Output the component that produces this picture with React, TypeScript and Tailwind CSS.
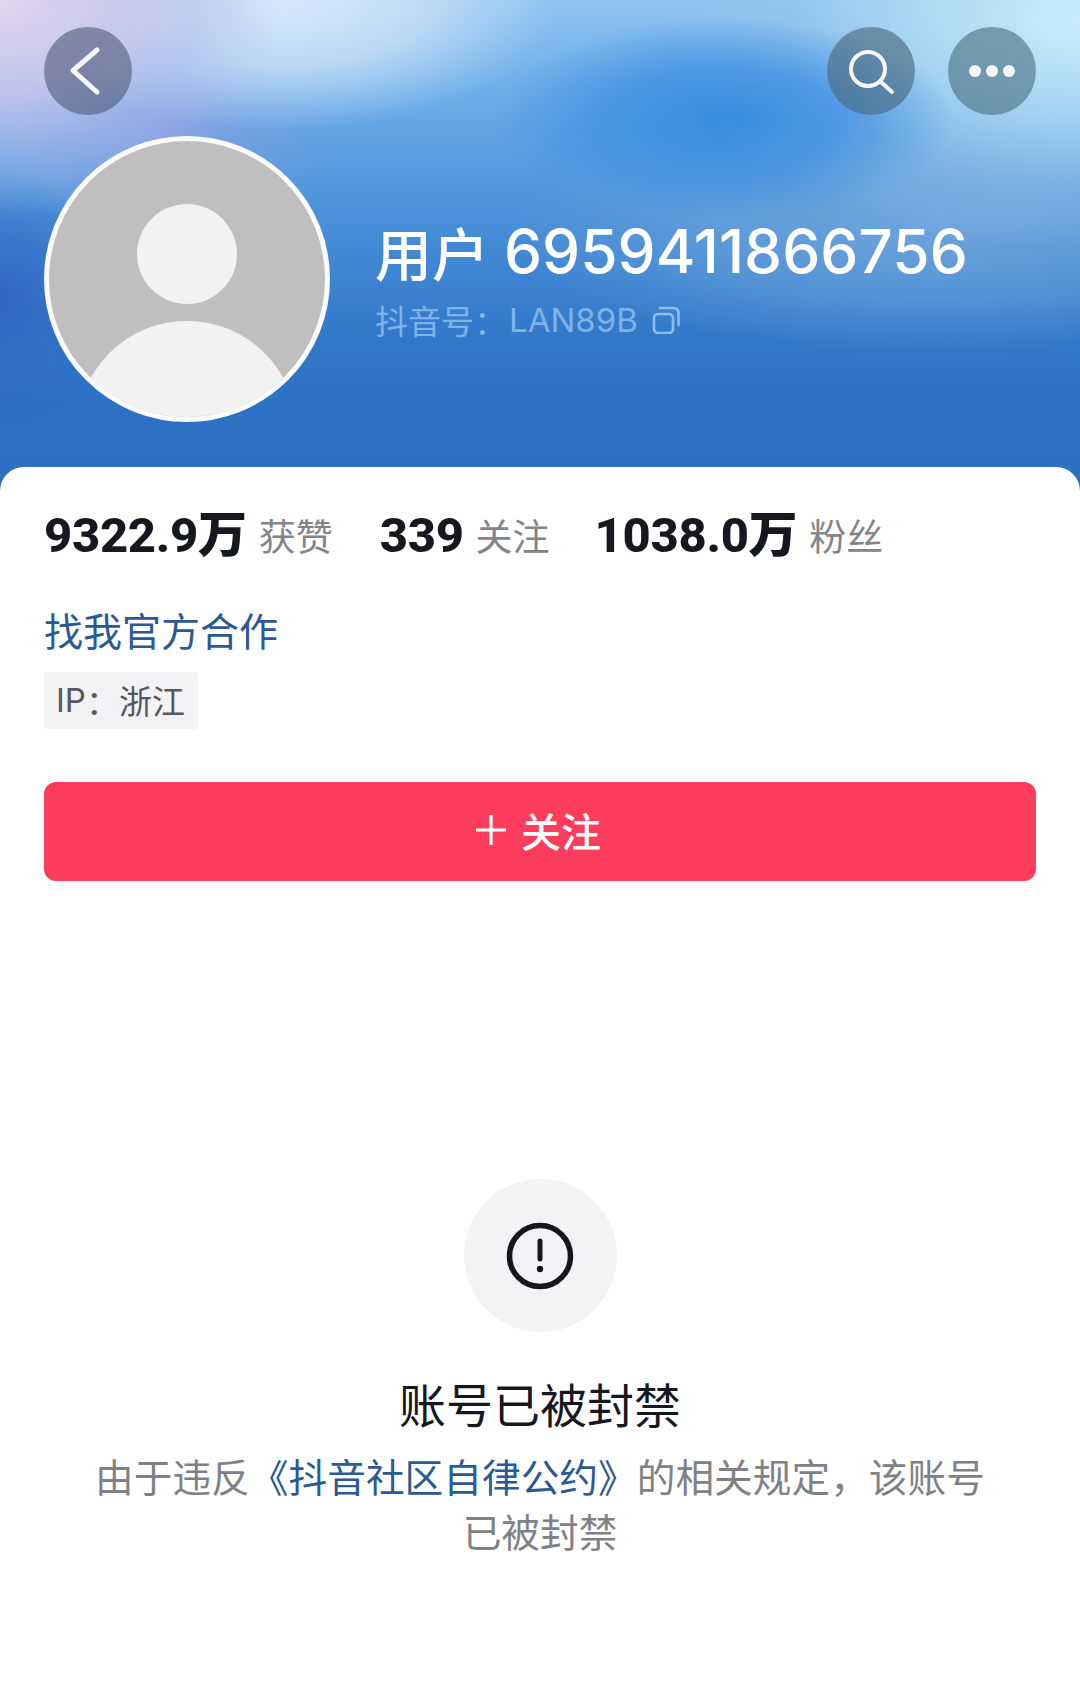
import React from "react";

function Stat({ n, l }: { n: string; l: string }) {
  return (
    <div className="flex items-center">
      <span className="text-[49px] leading-[60px] font-extrabold tracking-[-0.3px] text-[#16181f] font-['Roboto','Noto_Sans_CJK_SC',sans-serif]">{n}</span>
      <span className="text-[37px] leading-[60px] text-[#83858a] ml-[12px] mt-[-2px]">{l}</span>
    </div>
  );
}

export default function App() {
  return (
    <div className="w-[1080px] h-[1681px] bg-white overflow-hidden font-['Noto_Sans_CJK_SC','Liberation_Sans',sans-serif]">
      <div className="h-[490px] px-[44px] pt-[27px] bg-[radial-gradient(ellipse_280px_220px_at_0px_0px,#e2d6eeff_0%,#cfc8ecd8_40%,#b4bceb80_70%,#b4bceb00_100%),radial-gradient(ellipse_280px_130px_at_280px_0px,#d8e8fbff_0%,#d0e4f8c0_50%,#d0e4f800_100%),radial-gradient(ellipse_170px_110px_at_170px_135px,#8f9ce0b0_0%,#8f9ce000_100%),radial-gradient(ellipse_230px_100px_at_725px_118px,#3a8de0ff_0%,#3a8de0b0_50%,#3a8de000_100%),radial-gradient(ellipse_420px_230px_at_1080px_20px,#c8eefdff_0%,#b4dcf4d0_40%,#9cc8ec70_70%,#9cc8ec00_100%),radial-gradient(ellipse_420px_130px_at_930px_225px,#76a9dcd0_0%,#76a9dc70_55%,#76a9dc00_100%),radial-gradient(ellipse_130px_130px_at_0px_300px,#3267c4ff_0%,#3267c400_100%),linear-gradient(180deg,#8fc3f0_0%,#6bace8_20%,#5097dd_38%,#4188d4_52%,#3379ca_68%,#2c71c3_82%,#2b70c2_100%)]">
        <div className="flex items-center justify-between">
          <button className="w-[88px] h-[88px] rounded-full bg-[#4b5a7a]/60 flex items-center justify-center">
            <svg width="88" height="88" viewBox="0 0 88 88" fill="none" stroke="#f4f6fa" strokeWidth="5" strokeLinecap="round" strokeLinejoin="round">
              <path d="M53 23 L29 43.500 L53 65" />
            </svg>
          </button>
          <div className="flex gap-[33px]">
            <button className="w-[88px] h-[88px] rounded-full bg-[#4a6a80]/65 flex items-center justify-center">
              <svg width="88" height="88" viewBox="0 0 88 88" fill="none" stroke="#f4f6fa" strokeWidth="4" strokeLinecap="round">
                <circle cx="41" cy="42" r="17" />
                <path d="M54 55 L65 65" />
              </svg>
            </button>
            <button className="w-[88px] h-[88px] rounded-full bg-[#4f7488]/65 flex items-center justify-center gap-[5px]">
              <span className="w-[12px] h-[12px] rounded-full bg-[#f4f6fa]" />
              <span className="w-[12px] h-[12px] rounded-full bg-[#f4f6fa]" />
              <span className="w-[12px] h-[12px] rounded-full bg-[#f4f6fa]" />
            </button>
          </div>
        </div>
        <div className="flex items-start mt-[21px]">
          <div className="w-[286px] h-[286px] rounded-full border-[5px] border-[#fafbfd] bg-[#bfbfbf] overflow-hidden shrink-0">
            <svg width="276" height="276" viewBox="0 0 276 276">
              <circle cx="138" cy="113" r="50" fill="#f2f2f3" />
              <circle cx="138" cy="290" r="110" fill="#f2f2f3" />
            </svg>
          </div>
          <div className="ml-[45px] mt-[79px]">
            <div className="flex items-center h-[72px] text-white font-medium whitespace-nowrap">
              <span className="text-[57px] leading-[72px]">用户</span>
              <span className="text-[60.500px] leading-[72px] ml-[15px] font-['Inter',sans-serif]">6959411866756</span>
            </div>
            <div className="flex items-center mt-[11px] text-[#7fb2e8] text-[33px] leading-[44px]">
              <span>抖音号：</span>
              <span className="font-['Inter',sans-serif] ml-[2px]">LAN89B</span>
              <svg className="ml-[14px]" width="28" height="28" viewBox="0 0 28 28" fill="none" stroke="#8fbdec" strokeWidth="2.6" strokeLinejoin="round" strokeLinecap="round">
                <rect x="2" y="8" width="19" height="19" rx="4" />
                <path d="M8 2 H21 Q26.500 2 26.500 7.500 V19" />
              </svg>
            </div>
          </div>
        </div>
      </div>

      <div className="mt-[-23px] h-[1214px] bg-white rounded-t-[24px] px-[44px] pt-[39px]">
        <div className="flex items-center">
          <Stat n="9322.9万" l="获赞" />
          <div className="w-[47px]" />
          <Stat n="339" l="关注" />
          <div className="w-[45px]" />
          <Stat n="1038.0万" l="粉丝" />
        </div>
        <div className="mt-[36px] text-[39px] leading-[54px] text-[#2a5a92]">找我官方合作</div>
        <div className="mt-[16px] w-[154px] h-[57px] bg-[#f3f3f5] rounded-[4px] flex items-center pl-[12px] text-[33px] text-[#57585c] whitespace-nowrap">
          <span className="font-['Inter',sans-serif]">IP</span><span>：</span><span>浙江</span>
        </div>
        <button className="mt-[53px] w-[992px] h-[99px] rounded-[12px] bg-[#fe3c5c] flex items-center justify-center text-white text-[40px] font-medium pb-[4px] pr-[4px]">
          <svg width="32" height="32" viewBox="0 0 32 32" fill="none" stroke="white" strokeWidth="3.2" className="mr-[14px]">
            <path d="M16 1 V31 M1 16 H31" />
          </svg>
          关注
        </button>

        <div className="mt-[298px] flex flex-col items-center">
          <div className="w-[153px] h-[153px] rounded-full bg-[#f3f3f5] flex items-center justify-center">
            <svg width="68" height="68" viewBox="0 0 68 68" fill="none" stroke="#15171d" strokeWidth="5.500" strokeLinecap="round">
              <circle cx="34" cy="34" r="30.500" />
              <path d="M34 19 V37" strokeWidth="5" />
              <circle cx="34" cy="47" r="3.200" fill="#15171d" stroke="none" />
            </svg>
          </div>
          <div className="mt-[38px] text-[47px] leading-[66px] text-[#16181f]">账号已被封禁</div>
          <div className="mt-[12px] w-[900px] text-center text-[38.700px] leading-[55px] text-[#808186]">
            由于违反<span className="text-[#2a5a92]">《抖音社区自律公约》</span>的相关规定，该账号<br />已被封禁
          </div>
        </div>
      </div>
    </div>
  );
}
